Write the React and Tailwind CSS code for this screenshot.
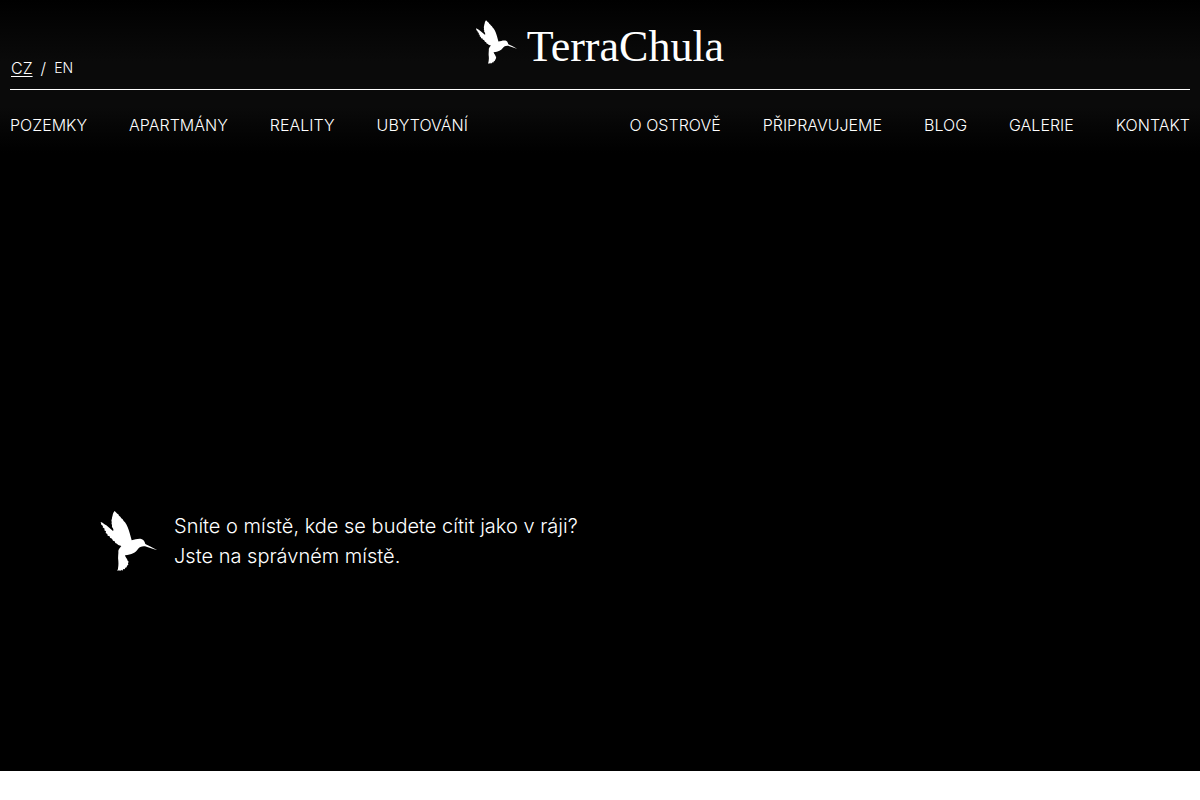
const leftLinks = ['Pozemky', 'Apartmány', 'Reality', 'Ubytování']
const rightLinks = ['O ostrově', 'Připravujeme', 'Blog', 'Galerie', 'Kontakt']

const Hummingbird = ({ className }) => (
  <svg
    className={className}
    viewBox="33 33 170 180"
    fill="currentColor"
    aria-hidden="true"
  >
    <path d="M33 66 C39 67 44 73 50 76 L70 93 C73 89 70 86 69 83 C65 81 68 77 67 74 C64 71 67 68 66 65 C64 60 67 58 67 54 C67 50 69 49 69 45 C70 39 72 36 75 33 C77 36 80 38 83 41 L86 43 L88 47 L92 50 L95 55 L99 58 L102 63 L106 67 C113 77 117 88 120 99 L126 121 C136 119 146 115 155 117 C162 119 165 125 167 132 L185 141 L203 151 C190 148 178 142 166 139 C157 138 149 141 145 147 C138 158 126 164 106 166 C107 172 113 176 114 182 L117 185 L115 190 L116 194 L112 197 L111 202 L107 203 L105 208 L101 207 L98 212 L94 209 L92 213 L88 211 L83 213 C86 204 87 193 86 183 C84 172 87 160 86 152 C88 146 91 143 95 138 C89 135 86 136 82 131 L77 129 L75 124 L70 122 L67 116 L61 113 L60 109 L54 107 L53 102 L48 99 L49 94 L44 91 L45 86 L39 82 L40 78 L35 74 Z" />
  </svg>
)

const NavList = ({ links }) => (
  <ul className="flex gap-[42px]">
    {links.map((link) => (
      <li key={link}>
        <a href="#" className="uppercase whitespace-nowrap">
          {link}
        </a>
      </li>
    ))}
  </ul>
)

const Header = () => (
  <header className="bg-[linear-gradient(#000,#0a0a0a_40%,#0a0a0a_70%,#000)] px-2.5 pt-5">
    <div className="grid grid-cols-[1fr_auto_1fr] items-end border-b border-white pb-[11px]">
      <div className="flex items-center gap-2 pl-px leading-5">
        <a href="#" className="underline underline-offset-2">
          CZ
        </a>
        <span>/</span>
        <a href="#" className="text-sm leading-5">
          EN
        </a>
      </div>
      <a href="#" className="flex h-[58px] items-start gap-2.5">
        <Hummingbird className="h-11 w-[41px]" />
        <span className="font-['Liberation_Serif',serif] text-[44px] leading-[54px]">
          TerraChula
        </span>
      </a>
    </div>
    <nav className="flex justify-between pt-[23px] pb-4 leading-6">
      <NavList links={leftLinks} />
      <NavList links={rightLinks} />
    </nav>
  </header>
)

const Hero = () => (
  <section className="flex items-center gap-4 px-25 pt-[358px] pb-[200px]">
    <Hummingbird className="h-[60px] w-[58px] shrink-0" />
    <p className="text-xl leading-[30px]">
      Sníte o místě, kde se budete cítit jako v ráji?
      <br />
      Jste na správném místě.
    </p>
  </section>
)

const App = () => {
  return (
    <div className="bg-black font-['Inter',sans-serif] font-light text-white">
      <Header />
      <main>
        <Hero />
      </main>
    </div>
  )
}

export default App
